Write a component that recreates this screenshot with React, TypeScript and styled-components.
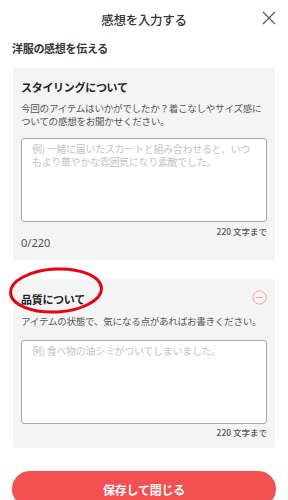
import styled, { createGlobalStyle } from 'styled-components';

const GlobalStyle = createGlobalStyle`
  html, body {
    margin: 0;
    padding: 0;
    background: #fff;
  }
  body {
    font-family: "Noto Sans CJK JP", "Noto Sans", sans-serif;
    color: #333;
  }
  * { box-sizing: border-box; }
`;

const Page = styled.div`
  width: 288px;
  height: 500px;
  overflow: hidden;
  background: #fff;
`;

const Header = styled.header`
  position: relative;
  height: 38px;
  display: flex;
  align-items: center;
  justify-content: center;
`;

const Title = styled.h1`
  margin: 0;
  font-size: 12.5px;
  font-weight: 500;
  letter-spacing: -0.3px;
  color: #333;
`;

const CloseButton = styled.button`
  position: absolute;
  right: 12px;
  top: 11px;
  width: 14px;
  height: 14px;
  padding: 0;
  border: none;
  background: none;
  display: flex;
`;

const SectionLabel = styled.div`
  padding: 2px 12px 0;
  height: 30px;
  font-size: 11px;
  font-weight: 700;
  letter-spacing: -0.3px;
  line-height: 16px;
  color: #333;
`;

const Card = styled.section<{ $mt?: number; $pb?: number }>`
  position: relative;
  margin: ${(p) => p.$mt ?? 0}px 13px 0;
  padding: 11px 8px ${(p) => p.$pb ?? 10}px;
  background: #f4f4f4;
  border-radius: 3px;
`;

const CardHead = styled.div<{ $h?: number }>`
  display: flex;
  align-items: center;
  justify-content: space-between;
  height: ${(p) => p.$h ?? 16}px;
`;

const CardTitle = styled.h2`
  margin: 0;
  font-size: 11px;
  font-weight: 700;
  letter-spacing: -0.3px;
  line-height: 16px;
  color: #222;
`;

const Desc = styled.p<{ $mt: number }>`
  margin: ${(p) => p.$mt}px 0 0;
  font-size: 9.6px;
  letter-spacing: -0.3px;
  line-height: 13px;
  color: #555;
`;

const Field = styled.textarea<{ $mt: number }>`
  display: block;
  width: 100%;
  height: 84px;
  margin-top: ${(p) => p.$mt}px;
  padding: 3px 10px;
  border: 1px solid #a8a8a8;
  border-radius: 3px;
  background: #fff;
  resize: none;
  font-family: "Noto Sans CJK JP", "Noto Sans", sans-serif;
  font-size: 10px;
  letter-spacing: -0.3px;
  line-height: 13px;
  color: #333;
  outline: none;

  &::placeholder {
    color: #c4c4c4;
  }
`;

const Limit = styled.div<{ $mt: number }>`
  margin-top: ${(p) => p.$mt}px;
  text-align: right;
  font-size: 8.5px;
  font-weight: 500;
  line-height: 12px;
  color: #555;
`;

const Count = styled.div`
  margin-top: -1px;
  font-size: 11px;
  line-height: 14px;
  color: #555;
  font-family: "Noto Sans", "Noto Sans CJK JP", sans-serif;
`;

const RemoveIcon = styled.span`
  display: flex;
  margin-top: -4px;
`;

const Annotation = styled.svg`
  position: absolute;
  left: -7px;
  top: -14px;
  pointer-events: none;
`;

const SaveButton = styled.button`
  display: block;
  width: 264px;
  height: 36px;
  margin: 23px 12px 0;
  border: none;
  border-radius: 18px;
  background: #f55051;
  color: #fff;
  font-family: "Noto Sans CJK JP", "Noto Sans", sans-serif;
  font-size: 12px;
  font-weight: 700;
  letter-spacing: -0.2px;
`;

export default function App() {
  return (
    <Page>
      <GlobalStyle />
      <Header>
        <Title>感想を入力する</Title>
        <CloseButton aria-label="閉じる">
          <svg width="14" height="14" viewBox="0 0 14 14">
            <path d="M1 1 L13 13 M13 1 L1 13" stroke="#555" strokeWidth="1.1" />
          </svg>
        </CloseButton>
      </Header>
      <SectionLabel>洋服の感想を伝える</SectionLabel>

      <Card>
        <CardHead>
          <CardTitle>スタイリングについて</CardTitle>
        </CardHead>
        <Desc $mt={7}>
          今回のアイテムはいかがでしたか？着こなしやサイズ感についての感想をお聞かせください。
        </Desc>
        <Field
          $mt={10}
          placeholder="例) 一緒に届いたスカートと組み合わせると、いつもより華やかな雰囲気になり素敵でした。"
        />
        <Limit $mt={3}>220 文字まで</Limit>
        <Count>0/220</Count>
      </Card>

      <Card $mt={19} $pb={10}>
        <Annotation width="100" height="52" viewBox="0 0 100 52">
          <ellipse
            cx="50"
            cy="25.5"
            rx="45.5"
            ry="21.5"
            fill="none"
            stroke="#e60012"
            strokeWidth="3"
            transform="rotate(-3 50 25.5)"
          />
        </Annotation>
        <CardHead $h={18}>
          <CardTitle>品質について</CardTitle>
          <RemoveIcon>
            <svg width="15" height="15" viewBox="0 0 15 15">
              <circle cx="7.5" cy="7.5" r="6.6" fill="none" stroke="#f4a3a3" strokeWidth="1" />
              <path d="M4 7.5 H11" stroke="#f4a3a3" strokeWidth="1" />
            </svg>
          </RemoveIcon>
        </CardHead>
        <Desc $mt={7}>アイテムの状態で、気になる点があればお書きください。</Desc>
        <Field $mt={12} placeholder="例) 食べ物の油シミがついてしまいました。" />
        <Limit $mt={2}>220 文字まで</Limit>
      </Card>

      <SaveButton>保存して閉じる</SaveButton>
    </Page>
  );
}
